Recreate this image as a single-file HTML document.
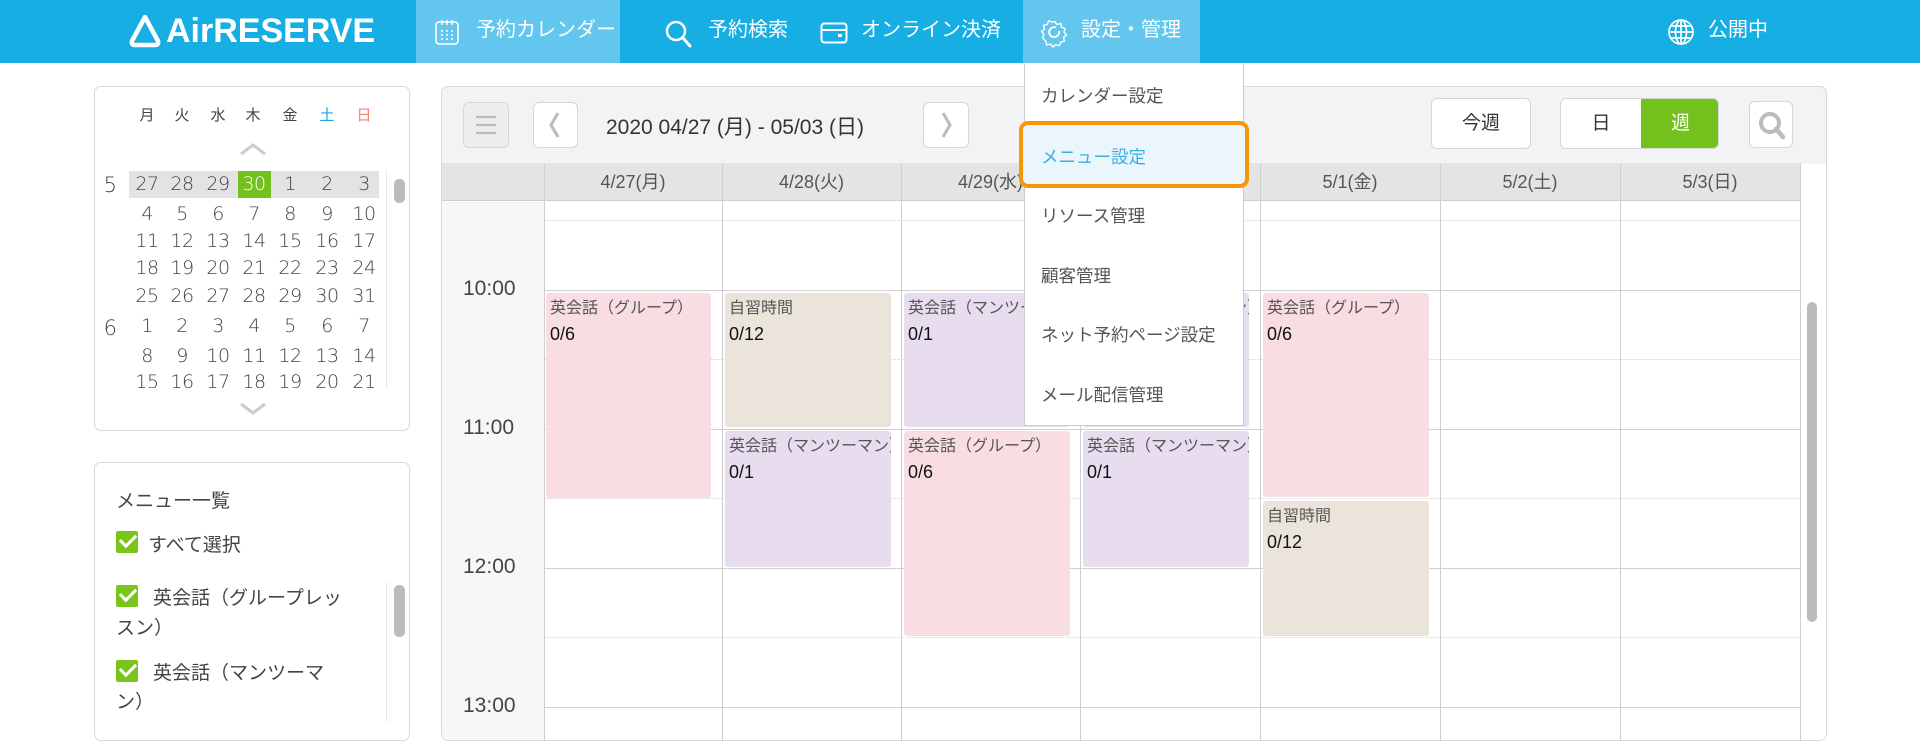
<!DOCTYPE html>
<html><head><meta charset="utf-8"><style>
*{box-sizing:border-box;margin:0;padding:0}
body{width:1920px;height:750px;overflow:hidden;background:#fff;font-family:"Liberation Sans","Noto Sans CJK JP",sans-serif;color:#333;position:relative}
.a{position:absolute}
.hdr{left:0;top:0;width:1920px;height:63px;background:#17aee4}
.nav{color:#fff;font-size:20px;top:0;height:63px;line-height:61px;white-space:nowrap}
.tab{background:#62c6ee;top:0;height:63px}
.panel{border:1px solid #d8d8d8;border-radius:7px;background:#fff}
.wd{top:104px;font-size:15px;width:30px;text-align:center;color:#444}
.num{font-size:19px;width:34px;text-align:center;color:#444;font-family:"DejaVu Sans","Noto Sans CJK JP",sans-serif;font-weight:300;letter-spacing:-0.5px}
.btn{background:#fff;border:1px solid #d6d6d6;border-radius:6px}
.dh{top:163px;height:38px;line-height:38px;text-align:center;font-size:18px;color:#555}
.vl{top:163px;height:578px;width:1px;background:#cfcfcf}
.hl{left:544px;width:1256px;height:1px;background:#d0d0d0}
.dl{left:544px;width:1256px;height:0;border-top:1px dotted #d6d6d6}
.tl{left:463px;font-size:21px;color:#444;width:70px}
.ev{border-radius:3px;overflow:hidden;white-space:nowrap;padding:6px 4px;font-size:16px;color:#555;line-height:20px}
.ev b{display:block;font-weight:normal;color:#111;font-size:18px;margin-top:5px}
.pk{background:#f8dde2}.bg{background:#ebe4da}.pu{background:#e8ddee}
.dd{font-size:17.5px;color:#555;left:1041px}
.cb{width:22px;height:22px;background:#7ac41c;border-radius:2px}
.cb:after{content:"";position:absolute;left:4px;top:3px;width:13px;height:7px;border-left:3px solid #fff;border-bottom:3px solid #fff;transform:rotate(-45deg)}
.ml{font-size:19px;color:#444}
</style></head><body>
<div class="a hdr"></div>
<svg class="a" style="left:127px;top:13px" width="36" height="36" viewBox="0 0 36 36"><path d="M18 4 L5 28 Q4 32 8 32 L28 32 Q32 32 31 28 Z" fill="none" stroke="#fff" stroke-width="4.5" stroke-linejoin="round"/></svg>
<div class="a" style="left:166px;top:10px;font-size:34px;color:#fff;font-weight:bold;letter-spacing:0px;line-height:42px">AirRESERVE</div>
<div class="a tab" style="left:416px;width:204px"></div>
<svg class="a" style="left:434px;top:18px" width="26" height="28" viewBox="0 0 26 28"><rect x="2" y="4" width="22" height="22" rx="3" fill="none" stroke="#fff" stroke-width="1.6"/><path d="M8 2v5M13 2v5M18 2v5" stroke="#fff" stroke-width="1.5"/><g fill="#fff"><circle cx="8" cy="13" r="1"/><circle cx="13" cy="13" r="1"/><circle cx="18" cy="13" r="1"/><circle cx="8" cy="17" r="1"/><circle cx="13" cy="17" r="1"/><circle cx="18" cy="17" r="1"/><circle cx="8" cy="21" r="1"/><circle cx="13" cy="21" r="1"/><circle cx="18" cy="21" r="1"/></g></svg>
<div class="a nav" style="left:476px">予約カレンダー</div>
<svg class="a" style="left:664px;top:19px" width="30" height="30" viewBox="0 0 30 30"><circle cx="12" cy="12" r="9" fill="none" stroke="#fff" stroke-width="2.5"/><path d="M19 19l7 8" stroke="#fff" stroke-width="3" stroke-linecap="round"/></svg>
<div class="a nav" style="left:708px">予約検索</div>
<svg class="a" style="left:820px;top:22px" width="28" height="22" viewBox="0 0 28 22"><rect x="1.5" y="1.5" width="25" height="19" rx="3" fill="none" stroke="#fff" stroke-width="2"/><path d="M2 8h24" stroke="#fff" stroke-width="2"/><rect x="18" y="12" width="4" height="3" fill="#fff"/></svg>
<div class="a nav" style="left:861px">オンライン決済</div>
<div class="a tab" style="left:1023px;width:177px"></div>
<svg class="a" style="left:1040px;top:19px" width="29" height="29" viewBox="0 0 29 29"><path d="M14.5 2.5l2.5 3 3.8-1 .8 3.8 3.7 1.3-1.3 3.6 2.5 2.8-3 2.5 1 3.8-3.8.8-1.3 3.7-3.6-1.3-2.8 2.5-2.5-3-3.8 1-.8-3.8L2.6 19l1.3-3.6L1.5 12.6l3-2.5-1-3.8 3.8-.8L8.6 1.8l3.6 1.3z" fill="none" stroke="#fff" stroke-width="1.4" stroke-linejoin="round"/><path d="M19 12a5 5 0 1 1-3-3.5" fill="none" stroke="#fff" stroke-width="1.8"/></svg>
<div class="a nav" style="left:1081px">設定・管理</div>
<svg class="a" style="left:1667px;top:18px" width="28" height="28" viewBox="0 0 28 28"><g fill="none" stroke="#fff" stroke-width="1.7"><circle cx="14" cy="14" r="12"/><ellipse cx="14" cy="14" rx="5.5" ry="12"/><path d="M14 2v24M2 14h24M4 8h20M4 20h20"/></g></svg>
<div class="a nav" style="left:1708px">公開中</div>

<div class="a panel" style="left:94px;top:86px;width:316px;height:345px"></div>
<div class="a wd" style="left:132px">月</div><div class="a wd" style="left:167px">火</div><div class="a wd" style="left:203px">水</div><div class="a wd" style="left:238px">木</div><div class="a wd" style="left:275px">金</div><div class="a wd" style="left:312px;color:#1ba6e0">土</div><div class="a wd" style="left:349px;color:#f08070">日</div>
<svg class="a" style="left:238px;top:142px" width="30" height="14" viewBox="0 0 30 14"><path d="M3 12L15 3l12 9" fill="none" stroke="#ccc" stroke-width="3"/></svg>
<svg class="a" style="left:238px;top:402px" width="30" height="14" viewBox="0 0 30 14"><path d="M3 2l12 9 12-9" fill="none" stroke="#ccc" stroke-width="3"/></svg>
<div class="a" style="left:386px;top:170px;width:1px;height:218px;background:#e8e8e8"></div>
<div class="a" style="left:394px;top:179px;width:11px;height:24px;background:#bbb;border-radius:5px"></div>
<div class="a" style="left:94px;top:170px;width:300px;height:218px;overflow:hidden">
<div style="position:relative">
<div class="a" style="left:35px;top:1px;width:250px;height:27px;background:#e3e3e3"></div>
<div class="a" style="left:144px;top:1px;width:33px;height:27px;background:#74c01c"></div>
<div class="a num" style="left:1px;top:3px;width:30px;font-size:21px">5</div>
<div class="a num" style="left:1px;top:146px;width:30px;font-size:21px">6</div>
<div id="g"></div>
</div></div>
<div class="a panel" style="left:94px;top:462px;width:316px;height:279px"></div>
<div class="a ml" style="left:116px;top:486px">メニュー一覧</div>
<div class="a cb" style="left:116px;top:531px"></div>
<div class="a ml" style="left:148px;top:530px">すべて選択</div>
<div class="a cb" style="left:116px;top:585px"></div>
<div class="a ml" style="left:153px;top:583px">英会話（グループレッ</div>
<div class="a ml" style="left:116px;top:613px">スン）</div>
<div class="a cb" style="left:116px;top:660px"></div>
<div class="a ml" style="left:153px;top:658px">英会話（マンツーマ</div>
<div class="a ml" style="left:116px;top:687px">ン）</div>
<div class="a" style="left:386px;top:582px;width:1px;height:140px;background:#e8e8e8"></div>
<div class="a" style="left:394px;top:585px;width:11px;height:52px;background:#bbb;border-radius:5px"></div>

<div class="a panel" style="left:441px;top:86px;width:1386px;height:655px;background:#f2f3f5;overflow:hidden">
<div class="a" style="left:0;top:77px;width:1386px;height:578px;background:#fff"></div>
<div class="a" style="left:0;top:115px;width:103px;height:540px;background:#f7f7f7"></div>
</div>
<div class="a btn" style="left:463px;top:102px;width:46px;height:46px;background:#eee"></div>
<svg class="a" style="left:474px;top:113px" width="24" height="24"><path d="M2 4h20M2 12h20M2 20h20" stroke="#bbb" stroke-width="2.2"/></svg>
<div class="a btn" style="left:533px;top:102px;width:45px;height:46px"></div>
<svg class="a" style="left:545px;top:110px" width="20" height="30"><path d="M13 3L6 15l7 12" fill="none" stroke="#bbb" stroke-width="3"/></svg>
<div class="a" style="left:606px;top:111px;font-size:21px;color:#333">2020 04/27 (月) - 05/03 (日)</div>
<div class="a btn" style="left:923px;top:102px;width:46px;height:46px"></div>
<svg class="a" style="left:937px;top:110px" width="20" height="30"><path d="M6 3l7 12-7 12" fill="none" stroke="#bbb" stroke-width="3"/></svg>
<div class="a btn" style="left:1431px;top:98px;width:100px;height:51px;text-align:center;line-height:49px;font-size:19px">今週</div>
<div class="a btn" style="left:1560px;top:98px;width:159px;height:51px;overflow:hidden">
<div class="a" style="left:0;top:0;width:80px;height:49px;text-align:center;line-height:49px;font-size:19px">日</div>
<div class="a" style="left:80px;top:0;width:79px;height:49px;background:#74c01c;color:#fff;text-align:center;line-height:49px;font-size:19px">週</div></div>
<div class="a btn" style="left:1749px;top:101px;width:44px;height:47px"></div>
<svg class="a" style="left:1757px;top:110px" width="30" height="30"><circle cx="13" cy="13" r="9" fill="none" stroke="#bbb" stroke-width="4"/><path d="M19 19l7 8" stroke="#bbb" stroke-width="4.5" stroke-linecap="round"/></svg>

<div class="a" style="left:442px;top:163px;width:1358px;height:38px;background:#e4e4e4;border-bottom:1px solid #ccc"></div>
<div class="a dh" style="left:544px;width:178px">4/27(月)</div>
<div class="a dh" style="left:722px;width:179px">4/28(火)</div>
<div class="a dh" style="left:901px;width:179px">4/29(水)</div>
<div class="a dh" style="left:1080px;width:180px">4/30(木)</div>
<div class="a dh" style="left:1260px;width:180px">5/1(金)</div>
<div class="a dh" style="left:1440px;width:180px">5/2(土)</div>
<div class="a dh" style="left:1620px;width:180px">5/3(日)</div>
<div class="a dl" style="top:220px"></div><div class="a dl" style="top:359px"></div><div class="a dl" style="top:498px"></div><div class="a dl" style="top:637px"></div>
<div class="a hl" style="top:290px"></div><div class="a hl" style="top:429px"></div><div class="a hl" style="top:568px"></div><div class="a hl" style="top:707px"></div>
<div class="a vl" style="left:544px"></div><div class="a vl" style="left:722px"></div><div class="a vl" style="left:901px"></div><div class="a vl" style="left:1080px"></div><div class="a vl" style="left:1260px"></div><div class="a vl" style="left:1440px"></div><div class="a vl" style="left:1620px"></div><div class="a vl" style="left:1800px"></div>
<div class="a tl" style="top:277px">10:00</div><div class="a tl" style="top:416px">11:00</div><div class="a tl" style="top:555px">12:00</div><div class="a tl" style="top:694px">13:00</div>
<div class="a" style="left:1807px;top:302px;width:10px;height:320px;background:#bbb;border-radius:5px"></div>

<div class="a ev pk" style="left:546px;top:293px;width:165px;height:205px">英会話（グループ）<b>0/6</b></div>
<div class="a ev bg" style="left:725px;top:293px;width:166px;height:134px">自習時間<b>0/12</b></div>
<div class="a ev pu" style="left:725px;top:431px;width:166px;height:136px">英会話（マンツーマン）<b>0/1</b></div>
<div class="a ev pu" style="left:904px;top:293px;width:166px;height:134px">英会話（マンツーマン）<b>0/1</b></div>
<div class="a ev pk" style="left:904px;top:431px;width:166px;height:205px">英会話（グループ）<b>0/6</b></div>
<div class="a ev pu" style="left:1083px;top:293px;width:166px;height:134px">英会話（マンツーマン）<b>0/1</b></div>
<div class="a ev pu" style="left:1083px;top:431px;width:166px;height:136px">英会話（マンツーマン）<b>0/1</b></div>
<div class="a ev pk" style="left:1263px;top:293px;width:166px;height:204px">英会話（グループ）<b>0/6</b></div>
<div class="a ev bg" style="left:1263px;top:501px;width:166px;height:135px">自習時間<b>0/12</b></div>

<div class="a" style="left:1024px;top:64px;width:220px;height:362px;background:#fff;border:1px solid #ccc;border-top:none"></div>
<div class="a" style="left:1019px;top:121px;width:230px;height:67px;background:#eaf6fb;border:4px solid #f7960b;border-radius:9px"></div>
<div class="a dd" style="top:83px">カレンダー設定</div>
<div class="a dd" style="top:144px;color:#3aafe2">メニュー設定</div>
<div class="a dd" style="top:203px">リソース管理</div>
<div class="a dd" style="top:263px">顧客管理</div>
<div class="a dd" style="top:322px">ネット予約ページ設定</div>
<div class="a dd" style="top:382px">メール配信管理</div>
<script>
var rows=[[27,28,29,30,1,2,3],[4,5,6,7,8,9,10],[11,12,13,14,15,16,17],[18,19,20,21,22,23,24],[25,26,27,28,29,30,31],[1,2,3,4,5,6,7],[8,9,10,11,12,13,14],[15,16,17,18,19,20,21]];
var ys=[3,33,60,87,115,145,175,201],xs=[36,71,107,143,179,216,253],h='';
rows.forEach(function(r,i){r.forEach(function(n,j){h+='<div class="a num" style="left:'+xs[j]+'px;top:'+ys[i]+'px'+(i==0&&j==3?';color:#fff':'')+'">'+n+'</div>';});});
document.getElementById('g').innerHTML=h;
</script>
</body></html>
